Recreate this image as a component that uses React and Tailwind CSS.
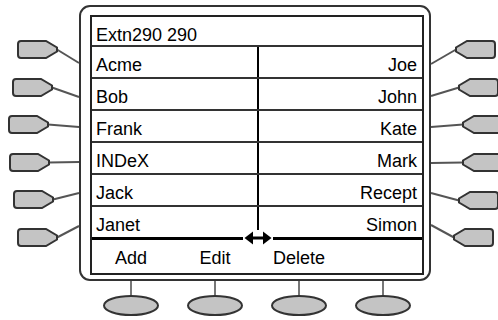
import React from "react";

const leftRows = ["Acme", "Bob", "Frank", "INDeX", "Jack", "Janet"];
const rightRows = ["Joe", "John", "Kate", "Mark", "Recept", "Simon"];
const softKeys = ["Add", "Edit", "Delete", ""];

// side keys: top-left corner of each key, and where its lead meets the frame
const leftKeys = [
  { x: 17, y: 40, to: [79, 63] },
  { x: 12, y: 78, to: [79, 97] },
  { x: 8, y: 115, to: [79, 127] },
  { x: 9, y: 153, to: [79, 162] },
  { x: 13, y: 190, to: [79, 193] },
  { x: 17, y: 228, to: [79, 226] },
];
const rightKeys = [
  { x: 455, y: 40, from: [431, 64] },
  { x: 458, y: 78, from: [431, 96] },
  { x: 462, y: 115, from: [431, 127] },
  { x: 462, y: 153, from: [431, 163] },
  { x: 458, y: 191, from: [431, 193] },
  { x: 453, y: 228, from: [431, 225] },
];
const bottomKeys = [131, 215, 299, 383];

const KEY_PATH = "M4,1 H29 L40,7.5 V11.5 L29,18 H4 Q1,18 1,15 V4 Q1,1 4,1 Z";

function Hardware() {
  return (
    <svg className="absolute inset-0 pointer-events-none" width="498" height="320">
      {leftKeys.map((k, i) => (
        <g key={"l" + i}>
          <line x1={k.x + 40} y1={k.y + 9.5} x2={k.to[0]} y2={k.to[1]} stroke="#555" strokeWidth="2" />
          <path d={KEY_PATH} transform={`translate(${k.x},${k.y})`} fill="#c4c4c4" stroke="#333" strokeWidth="2" />
        </g>
      ))}
      {rightKeys.map((k, i) => (
        <g key={"r" + i}>
          <line x1={k.from[0]} y1={k.from[1]} x2={k.x + 1} y2={k.y + 9.5} stroke="#555" strokeWidth="2" />
          <path d={KEY_PATH} transform={`translate(${k.x + 41},${k.y}) scale(-1,1)`} fill="#c4c4c4" stroke="#333" strokeWidth="2" />
        </g>
      ))}
      {bottomKeys.map((cx) => (
        <g key={cx}>
          <line x1={cx} y1="281" x2={cx} y2="296" stroke="#777" strokeWidth="2" />
          <ellipse cx={cx} cy="305.5" rx="27" ry="9.5" fill="#c4c4c4" stroke="#333" strokeWidth="2" />
        </g>
      ))}
    </svg>
  );
}

function Arrow() {
  return (
    <svg width="30" height="16" viewBox="0 0 30 16">
      <line x1="8" y1="8" x2="22" y2="8" stroke="#000" strokeWidth="3" />
      <path d="M1.5,8 L10,1.5 L10,14.5 Z" fill="#000" />
      <path d="M28.5,8 L20,1.5 L20,14.5 Z" fill="#000" />
    </svg>
  );
}

export default function App() {
  return (
    <div
      className="relative w-[498px] h-[320px] bg-white overflow-hidden text-black"
      style={{ fontFamily: '"Liberation Sans", Arial, sans-serif' }}
    >
      <div className="pl-[79px] pt-[5px]">
        <div className="w-[352px] h-[276px] border-2 border-[#333] rounded-[11px] pl-[9px] pt-[8px] pr-[5px] pb-[4px]">
          <div className="h-full border-2 border-[#222] flex flex-col text-[18px]">
            <div className="h-[30px] border-b-2 border-[#333] pl-[4px] pt-[6px] leading-[24px] shrink-0">
              Extn290 290
            </div>
            {leftRows.map((name, i) => {
              const last = i === leftRows.length - 1;
              return (
                <div
                  key={name}
                  className={`relative flex shrink-0 ${
                    last ? "h-[33px] border-b-[3px] border-black" : "h-[32px] border-b-2 border-[#333]"
                  }`}
                >
                  <div className="w-[167px] border-r-2 border-black pl-[4px] pt-[6px] leading-[24px]">
                    {name}
                  </div>
                  <div className="flex-1 text-right pr-[5px] pt-[6px] leading-[24px]">
                    {rightRows[i]}
                  </div>
                  {last && (
                    <div className="absolute left-[151px] bottom-[-9px] w-[30px] h-[16px] bg-white">
                      <Arrow />
                    </div>
                  )}
                </div>
              );
            })}
            <div className="flex-1 grid grid-cols-[84px_84px_84px_1fr] -ml-[3px]">
              {softKeys.map((label, i) => (
                <div key={i} className="text-center pt-[6px] leading-[24px]">
                  {label}
                </div>
              ))}
            </div>
          </div>
        </div>
      </div>
      <Hardware />
    </div>
  );
}
